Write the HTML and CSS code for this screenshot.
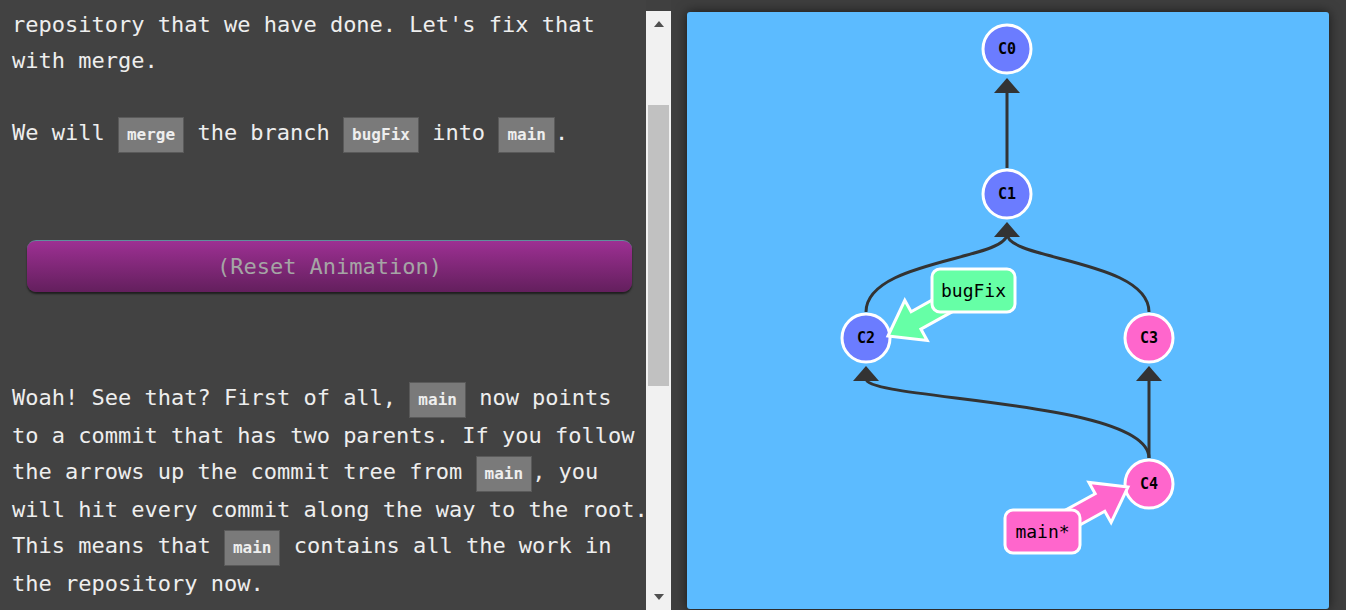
FILE: index.html
```html
<!DOCTYPE html>
<html lang="en">
<head>
<meta charset="utf-8">
<title>Merge lesson</title>
<link rel="stylesheet" href="styles.css">
</head>
<body>
<div class="app">
  <div class="lesson">
    <div class="lesson-text">
      <p class="p-first">repository that we have done. Let's fix that with merge.</p>
      <p class="p-second">We will <code>merge</code> the branch <code>bugFix</code> into <code>main</code>.</p>
      <div class="btn-row"><button class="reset">(Reset Animation)</button></div>
      <p>Woah! See that? First of all, <code>main</code> now points to a commit that has two parents. If you follow the arrows up the commit tree from <code>main</code>, you will hit every commit along the way to the root. This means that <code>main</code> contains all the work in the repository now.</p>
    </div>
  </div>
  <div class="scrollbar">
    <div class="sb-up"></div>
    <div class="sb-thumb"></div>
    <div class="sb-down"></div>
  </div>
  <div class="stage">
    <div class="canvas">
      <svg width="642" height="597" viewBox="687 12 642 597" xmlns="http://www.w3.org/2000/svg">
        <g class="edges" fill="none" stroke="#333" stroke-width="3">
          <path d="M1007,168 L1007,90"/>
          <path d="M866,312 C866,260 1007,260 1007,234"/>
          <path d="M1149,312 C1149,260 1007,260 1007,234"/>
          <path d="M1149,458 C1149,400 866,400 866,379"/>
          <path d="M1149,458 L1149,379"/>
        </g>
        <g fill="#333">
          <polygon points="1007,78 994,93 1020,93"/>
          <polygon points="1007,222 994,237 1020,237"/>
          <polygon points="866,366 853,381 879,381"/>
          <polygon points="1149,366 1136,381 1162,381"/>
        </g>
        <g stroke="#fff" stroke-width="3">
          <circle cx="1007" cy="49" r="24" fill="#6b7cff"/>
          <circle cx="1007" cy="194" r="24" fill="#6b7cff"/>
          <circle cx="866" cy="338" r="24" fill="#6b7cff"/>
          <circle cx="1149" cy="338" r="24" fill="#ff66cc"/>
          <circle cx="1149" cy="484" r="24" fill="#ff66cc"/>
        </g>
        <g class="node-label" text-anchor="middle">
          <text x="1007" y="54">C0</text>
          <text x="1007" y="199">C1</text>
          <text x="866" y="343">C2</text>
          <text x="1149" y="343">C3</text>
          <text x="1149" y="489">C4</text>
        </g>
        <g stroke="#fff" stroke-width="3" stroke-linejoin="miter">
          <polygon fill="#66ffa6" points="888,336 904.8,300.3 911.1,311.7 953,288.4 962.8,305.8 920.9,329.1 927.2,340.5"/>
          <rect x="932" y="269" width="83" height="43" rx="8" fill="#66ffa6"/>
          <polygon fill="#ff66cc" points="1128,487 1088.9,482.4 1095.2,493.7 1044.4,521.7 1054,539.3 1104.8,511.3 1111.1,522.6"/>
          <rect x="1005" y="510" width="75" height="43" rx="8" fill="#ff66cc"/>
        </g>
        <g class="branch-label" text-anchor="middle">
          <text x="973.5" y="297">bugFix</text>
          <text x="1042.5" y="538">main*</text>
        </g>
      </svg>
    </div>
  </div>
</div>
</body>
</html>
```
FILE: styles.css
```css
* { box-sizing: border-box; }
html, body {
  margin: 0;
  padding: 0;
  width: 1346px;
  height: 610px;
  overflow: hidden;
  background: #404040;
}
.app {
  display: flex;
  height: 610px;
}
.lesson {
  width: 646px;
  height: 610px;
  overflow: hidden;
  background: #424242;
  flex: none;
}
.lesson-text {
  width: 649px;
  padding: 7px 0 0 12px;
  font-family: "DejaVu Sans Mono", monospace;
  font-size: 22px;
  line-height: 36px;
  color: #eeeeee;
}
.lesson-text p {
  margin: 0;
}
.p-first {
  margin-bottom: 36px !important;
}
code {
  display: inline-block;
  font-family: "DejaVu Sans Mono", monospace;
  font-weight: bold;
  font-size: 16px;
  line-height: 34px;
  height: 36px;
  padding: 0 8px;
  background: #7a7a7a;
  border: 1px solid #5a5a5a;
  color: #eeeeee;
}
.btn-row {
  padding: 87px 17px 88px 15px;
}
.reset {
  display: block;
  width: 100%;
  height: 52px;
  border: none;
  border-top: 1px solid #5f8f9c;
  border-radius: 9px;
  background: linear-gradient(#9d3093, #631f5d);
  box-shadow: 0 2px 2px rgba(0, 0, 0, 0.55);
  color: #a5a5a5;
  font-family: "DejaVu Sans Mono", monospace;
  font-size: 22px;
  padding: 0;
}
.scrollbar {
  flex: none;
  width: 25px;
  margin-top: 11px;
  height: 599px;
  background: #f1f1f1;
  display: flex;
  flex-direction: column;
  align-items: center;
}
.sb-up {
  width: 0;
  height: 0;
  margin-top: 10px;
  border-left: 5px solid transparent;
  border-right: 5px solid transparent;
  border-bottom: 6px solid #505050;
}
.sb-thumb {
  width: 21px;
  height: 281px;
  margin-top: 78px;
  background: #c1c1c1;
}
.sb-down {
  width: 0;
  height: 0;
  margin-top: auto;
  margin-bottom: 10px;
  border-left: 5px solid transparent;
  border-right: 5px solid transparent;
  border-top: 6px solid #505050;
}
.stage {
  flex: 1;
  padding: 12px 17px 0 16px;
  background: #3e3e3e;
}
.canvas {
  width: 642px;
  height: 597px;
  background: #5cbbff;
  border-radius: 3px;
  box-shadow: 0 0 12px rgba(0, 0, 0, 0.6);
  overflow: hidden;
}
.canvas svg {
  display: block;
}
.node-label {
  font-family: "DejaVu Sans Mono", monospace;
  font-weight: bold;
  font-size: 15px;
  fill: #000;
}
.branch-label {
  font-family: "DejaVu Sans Mono", monospace;
  font-size: 18px;
  fill: #000;
}
```
